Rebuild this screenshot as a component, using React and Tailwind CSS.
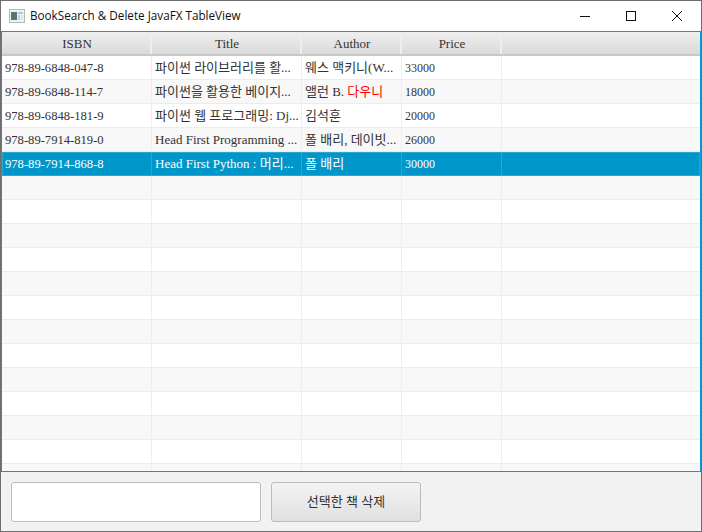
const font = "[font-family:'Liberation_Serif','Noto_Sans_CJK_KR',serif]"

const books = [
  { isbn: '978-89-6848-047-8', title: '파이썬 라이브러리를 활...', author: '웨스 맥키니(W...', price: '33000' },
  { isbn: '978-89-6848-114-7', title: '파이썬을 활용한 베이지...', author: <>앨런 B.&nbsp;<span className="text-[#ff0000]">다우니</span></>, price: '18000' },
  { isbn: '978-89-6848-181-9', title: '파이썬 웹 프로그래밍: Dj...', author: '김석훈', price: '20000' },
  { isbn: '978-89-7914-819-0', title: 'Head First Programming ...', author: '폴 배리, 데이빗...', price: '26000' },
  { isbn: '978-89-7914-868-8', title: 'Head First Python : 머리...', author: '폴 배리', price: '30000' },
]

const columns = ['w-[150px] text-[12.6px] pt-[1px]', 'w-[150px] text-[13px]', 'w-[100px] text-[13px]', 'w-[100px] text-[12px]']
const headers = ['w-[150px]', 'w-[150px]', 'w-[100px]', 'w-[100px]']

function HeaderCell({ label, className }) {
  return (
    <div className={`${className} h-full flex items-center justify-center pl-[2px] pt-[1px] border-r-2 border-[#eeeeee] text-[13px] text-[#333333] shrink-0`}>
      {label}
    </div>
  )
}

function Row({ book, index, selected }) {
  const bg = selected
    ? 'bg-[#0096c9] text-white outline-1 -outline-offset-1 outline-[#2aa8d2]'
    : index % 2 === 0
      ? 'bg-white text-[#333333] border-b border-[#ececec]'
      : 'bg-[#f8f8f8] text-[#333333] border-b border-[#ececec]'
  const line = selected ? 'border-[#2aa8d2]' : 'border-[#eeeeee]'
  const cells = book ? [book.isbn, book.title, book.author, book.price] : ['', '', '', '']
  return (
    <div className={`h-[24px] shrink-0 flex ${bg}`}>
      {cells.map((text, i) => (
        <div key={i} className={`${columns[i]} shrink-0 h-full flex items-center pl-[3px] border-r ${line} whitespace-nowrap overflow-hidden`}>
          {text}
        </div>
      ))}
      <div className="flex-1" />
    </div>
  )
}

export default function App() {
  const rows = Array.from({ length: 18 }, (_, i) => books[i] || null)

  return (
    <div className={`w-[702px] h-[532px] flex flex-col overflow-hidden bg-[#f2f2f2] border-x border-b border-t border-[#6e6e6e] ${font}`}>
      {/* title bar */}
      <div className="h-[30px] shrink-0 bg-white flex items-center">
        <svg className="ml-[8px] w-[16px] h-[14px]" viewBox="0 0 16 14">
          <rect x="0.5" y="0.5" width="15" height="13" fill="#eef1f1" stroke="#b4babb" />
          <rect x="2" y="3" width="6" height="8" fill="#54767c" />
          <rect x="9" y="3" width="5" height="2" fill="#b9c8ca" />
          <rect x="9" y="6" width="2" height="5" fill="#c7d3d5" />
          <rect x="12" y="6" width="2" height="5" fill="#dfe5e6" />
        </svg>
        <span className="ml-[5px] text-[11.7px] text-[#111111] [font-family:'Open_Sans',sans-serif]">BookSearch &amp; Delete JavaFX TableView</span>
        <div className="ml-auto flex items-center h-full">
          <svg className="w-[46px] h-[30px]" viewBox="0 0 46 30"><path d="M18 15.5h10" stroke="#111" strokeWidth="1" /></svg>
          <svg className="w-[46px] h-[30px]" viewBox="0 0 46 30"><rect x="18.5" y="10.5" width="9" height="9" fill="none" stroke="#111" strokeWidth="1" /></svg>
          <svg className="w-[46px] h-[30px] mr-[1px]" viewBox="0 0 46 30"><path d="M18 10l10 10M28 10l-10 10" stroke="#111" strokeWidth="1" /></svg>
        </div>
      </div>

      {/* table */}
      <div className="h-[441px] shrink-0 flex flex-col overflow-hidden border border-[#039ed3] bg-white">
        <div className="h-[24px] shrink-0 flex border-b-2 border-[#c8c8c8] bg-linear-to-b from-[#efefef] to-[#dadada]">
          <HeaderCell label="ISBN" className={headers[0]} />
          <HeaderCell label="Title" className={headers[1]} />
          <HeaderCell label="Author" className={headers[2]} />
          <HeaderCell label="Price" className={headers[3]} />
          <div className="flex-1" />
        </div>
        {rows.map((book, i) => (
          <Row key={i} book={book} index={i} selected={i === 4} />
        ))}
      </div>

      {/* bottom bar */}
      <div className="flex-1 flex items-center gap-[10px] pl-[10px] bg-[#f2f2f2]">
        <input className="w-[250px] h-[40px] bg-white border border-[#bdbdbd] rounded-[3px] outline-none" />
        <button className="w-[150px] h-[40px] border border-[#bdbdbd] rounded-[3px] bg-linear-to-b from-[#f4f4f4] to-[#e0e0e0] text-[13px] text-[#333333]">
          선택한 책 삭제
        </button>
      </div>
    </div>
  )
}
